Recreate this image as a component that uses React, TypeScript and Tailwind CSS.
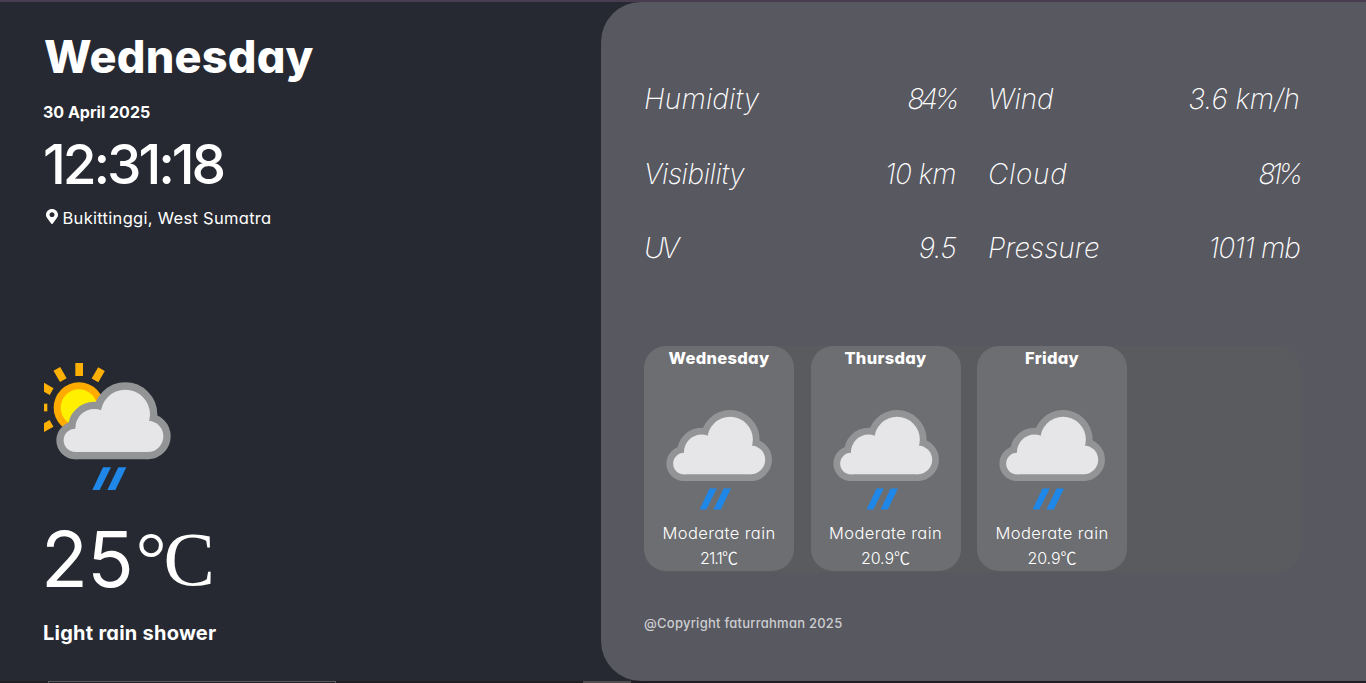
import { FaMapMarkerAlt } from "react-icons/fa";

function CloudShape() {
  return (
    <>
      <circle cx="136" cy="271" r="35" />
      <circle cx="193" cy="234" r="57" />
      <circle cx="286" cy="193" r="74" />
      <circle cx="353" cy="259" r="47" />
      <path d="M136 306V260L193 200L286 193L353 212V306Z" />
    </>
  );
}

function RainCloud() {
  return (
    <>
      <g fill="#929495" stroke="#929495" strokeWidth="44" strokeLinejoin="round">
        <CloudShape />
      </g>
      <g fill="#e6e6e9">
        <CloudShape />
      </g>
      <path fill="#1f87e8" d="M219 352H243L209 420H187ZM265 352H289L256 420H232Z" />
    </>
  );
}

const rays = [-120, -90, -60, -30, 0, 30];

function SunRainIcon() {
  return (
    <svg viewBox="42 36 384 390" className="h-[130px] w-[128px] overflow-hidden">
      {rays.map((angle) => (
        <rect key={angle} x="136" y="39" width="23" height="39" fill="#ffb005" transform={`rotate(${angle} 147 173)`} />
      ))}
      <circle cx="147" cy="173" r="76" fill="#ffab00" />
      <circle cx="147" cy="173" r="55" fill="#fff000" />
      <RainCloud />
    </svg>
  );
}

const stats = [
  { label: "Humidity", labelClass: "tracking-[0.15px]", value: "84%", valueClass: "tracking-[-3.5px]" },
  { label: "Wind", labelClass: "tracking-[-0.1px]", value: "3.6 km/h", valueClass: "tracking-[0px]" },
  { label: "Visibility", labelClass: "tracking-[-0.4px]", value: "10 km", valueClass: "tracking-[-0.6px]" },
  { label: "Cloud", labelClass: "tracking-[0.7px]", value: "81%", valueClass: "tracking-[-4px] mr-px" },
  { label: "UV", labelClass: "tracking-[-3px]", value: "9.5", valueClass: "tracking-[-0.6px]" },
  { label: "Pressure", labelClass: "tracking-[0px]", value: "1011 mb", valueClass: "tracking-[-0.9px]" },
];

const forecast = [
  { day: "Wednesday", temp: "21.1", tempClass: "tracking-[-0.9px]" },
  { day: "Thursday", temp: "20.9", tempClass: "tracking-[-0.1px]" },
  { day: "Friday", temp: "20.9", tempClass: "tracking-[-0.1px]" },
];

export default function App() {
  return (
    <div className="flex h-[683px] w-full flex-col overflow-hidden bg-[#262931] font-['Inter','Noto_Sans_CJK_SC',sans-serif] text-white [font-feature-settings:'cv11']">
      <div className="h-[2px] shrink-0 bg-[#483c50]" />
      <div className="flex h-[679px] shrink-0">
        <section className="flex w-[601px] shrink-0 flex-col pl-11">
          <h1 className="mt-[22px] h-[66px] text-[45px] leading-[66px] font-extrabold tracking-[0.2px]">Wednesday</h1>
          <p className="mt-[10px] ml-[-1px] h-6 text-base leading-6 font-bold">30 April 2025</p>
          <p className="mt-[7px] ml-[-1px] h-[66px] text-[55px] leading-[66px] font-medium tracking-[-3.1px]">12:31:18</p>
          <p className="mt-[9px] flex h-6 text-[16.5px] leading-6">
            <FaMapMarkerAlt className="mt-[3px] mr-[5px] ml-[1.5px] h-[15px] w-[12px]" preserveAspectRatio="none" />
            <span className="tracking-[0.3px]">Bukittinggi, West Sumatra</span>
          </p>
          <div className="mt-[132px]">
            <SunRainIcon />
          </div>
          <p className="mt-[22px] ml-[-3px] flex h-[90px] text-[77px] leading-[90px]">
            <span className="tracking-[-1px]">25</span>
            <span className="ml-[3px] font-['Liberation_Serif',serif]">
              <span className="tracking-[-3px]">°</span>C
            </span>
          </p>
          <p className="mt-[14px] ml-[-1px] h-[30px] text-xl leading-[30px] font-bold tracking-[0.25px]">Light rain shower</p>
        </section>
        <section className="flex grow flex-col rounded-l-[40px] bg-[#585860] pr-[66px] pl-[43px]">
          <div className="mt-[76px] grid grid-cols-2 gap-x-8 gap-y-[32.5px] text-[28px] leading-[42px] font-[250] italic">
            {stats.map((s) => (
              <div key={s.label} className="flex h-[42px] justify-between">
                <span className={s.labelClass}>{s.label}</span>
                <span className={s.valueClass}>{s.value}</span>
              </div>
            ))}
          </div>
          <div className="mt-[77px] flex h-[226px] gap-[16.5px] rounded-[22px] bg-[#5a5b5e]">
            {forecast.map((f) => (
              <div key={f.day} className="flex h-[225px] w-[150px] flex-col items-center rounded-[22px] bg-[#6d6e71] text-base leading-6">
                <h2 className="h-6 text-[16.5px] font-extrabold tracking-[0.3px]">{f.day}</h2>
                <svg viewBox="78 97 344 325" className="mt-10 h-[100px] w-[106px] shrink-0">
                  <RainCloud />
                </svg>
                <p className="mt-[11px] text-[16.5px] font-[350] tracking-[0.4px]">Moderate rain</p>
                <p className="mt-px flex font-[350]">
                  <span className={f.tempClass}>{f.temp}</span>
                  <span className="mt-[-1px] font-['Noto_Sans_CJK_SC',sans-serif]">℃</span>
                </p>
              </div>
            ))}
          </div>
          <p className="mt-[41px] text-[13px] leading-5 font-medium text-[#cdcdd0] tracking-[0.25px]">@Copyright faturrahman 2025</p>
        </section>
      </div>
      <div className="flex h-[2px] shrink-0 bg-[#201e20] pl-12">
        <div className="h-[2px] w-[288px] border border-b-0 border-[#5c5c5e]" />
        <div className="ml-[247px] h-[2px] w-12 bg-[#514b4c]" />
      </div>
    </div>
  );
}
